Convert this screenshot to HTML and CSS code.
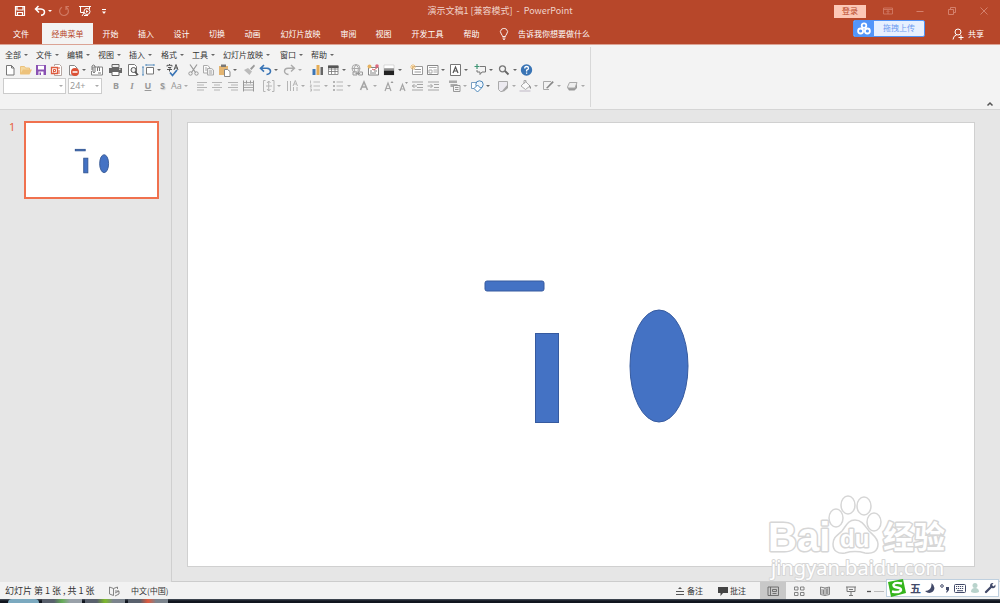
FILE: index.html
```html
<!DOCTYPE html>
<html lang="zh-CN">
<head>
<meta charset="utf-8">
<title>演示文稿1 [兼容模式] - PowerPoint</title>
<link rel="stylesheet" href="styles.css">
</head>
<body>
<header class="header">
  <div class="titlebar">
    <div class="quick">
      <button aria-label="保存"><svg width="12" height="12" viewBox="0 0 12 12"><path d="M1.5 1.5h9v9h-9zM3 1.5v3.5h6V1.500M3.500 10.500V7.500h5v3" fill="none" stroke="#fff" stroke-width="1.200"/></svg></button>
      <button class="drop" aria-label="撤消"><svg width="12" height="12" viewBox="0 0 12 12"><path d="M4.500 1 1.500 4l3.500 3.500M1.500 4H7q3.500.3 3.500 3.200Q10.300 10 7 10.300" fill="none" stroke="#fff" stroke-width="1.500"/></svg></button>
      <button aria-label="重复"><svg width="12" height="12" viewBox="0 0 12 12"><path d="M4 2.200A4.400 4.400 0 1 0 8.500 2.500M8 5V1.500h3" fill="none" stroke="#d07a64" stroke-width="1.200"/></svg></button>
      <button aria-label="从头开始"><svg width="12" height="12" viewBox="0 0 12 12"><path d="M0 1.500h12M1.500 2v5.500H5M10.500 2v2M3 11l2-3" fill="none" stroke="#fff"/><circle cx="8" cy="6.500" r="3" fill="none" stroke="#fff"/><path d="m7 5 2.500 1.500L7 8z" fill="#fff"/><path d="M5 10.500h4" stroke="#fff"/></svg></button>
      <button aria-label="自定义快速访问工具栏"><svg width="12" height="12" viewBox="0 0 12 12"><path d="M4 4.500h4" stroke="#fff"/><path d="M4 6.500h4L6 9z" fill="#fff"/></svg></button>
    </div>
    <h1 class="title">演示文稿1 [兼容模式] &nbsp;-&nbsp; PowerPoint</h1>
    <div class="window">
      <button class="login">登录</button>
      <button aria-label="功能区显示选项"><svg width="12" height="12" viewBox="0 0 12 12"><path d="M1.500 3h9v6h-9zM1.500 4.500h9M6 9V5.500M4.500 7 6 5.500 7.500 7" fill="none" stroke="#d4806c" stroke-width=".8"/></svg></button>
      <button aria-label="最小化"><svg width="12" height="12" viewBox="0 0 12 12"><path d="M2.500 6.500h7" stroke="#d4806c"/></svg></button>
      <button aria-label="还原"><svg width="12" height="12" viewBox="0 0 12 12"><path d="M2.500 4.500h5v5h-5zM4.500 4V2.500h5v5H8" fill="none" stroke="#d4806c"/></svg></button>
      <button aria-label="关闭"><svg width="12" height="12" viewBox="0 0 12 12"><path d="m2.500 2.500 7 7m0-7-7 7" stroke="#d4806c"/></svg></button>
    </div>
  </div>
  <div class="tabrow">
    <nav class="tabs">
      <button>文件</button><button class="active">经典菜单</button><button>开始</button><button>插入</button><button>设计</button><button>切换</button><button>动画</button><button>幻灯片放映</button><button>审阅</button><button>视图</button><button>开发工具</button><button>帮助</button>
    </nav>
    <button class="tell"><svg width="10" height="12" viewBox="0 0 10 12"><path d="M3.500 8.500Q3.500 7.500 2.300 6A3.500 3.500 0 1 1 7.700 6Q6.500 7.500 6.500 8.500zM3.500 10h3M4 11.300h2" fill="none" stroke="#fff" stroke-width=".9"/></svg>告诉我你想要做什么</button>
    <button class="share"><svg width="12" height="12" viewBox="0 0 12 12"><circle cx="6" cy="4" r="3" fill="none" stroke="#fff"/><path d="M1 11.500Q1.500 7.500 4.500 7M9 7v5M6.500 9.500h5" fill="none" stroke="#fff"/></svg>共享</button>
  </div>
  <button class="upload"><span class="upload-logo"><svg width="14" height="13" viewBox="0 0 14 13"><g fill="none" stroke="#fff" stroke-width="1.800"><circle cx="7" cy="3.600" r="2.300"/><circle cx="3.600" cy="9" r="2.500"/><circle cx="10.400" cy="9" r="2.500"/></g></svg></span><span class="upload-text">拖拽上传</span></button>
</header>

<section class="ribbon">
  <div class="group">
    <div class="menus">
      <button class="drop">全部</button><button class="drop">文件</button><button class="drop">编辑</button><button class="drop">视图</button><button class="drop">插入</button><button class="drop">格式</button><button class="drop">工具</button><button class="drop">幻灯片放映</button><button class="drop">窗口</button><button class="drop">帮助</button>
    </div>
    <div class="tools standard">
      <button aria-label="新建"><svg viewBox="0 0 14 14"><path d="M3.500 2.500h5l2.500 2.500v7h-7.500zM8.500 2.500V5H11" fill="#fff" stroke="#777"/></svg></button>
      <button aria-label="打开"><svg viewBox="0 0 14 14"><path d="M2.500 11V3.500h4l1 1.500h4v2" fill="#f5d9a0" stroke="#ecc27c"/><path d="M2 11.500 5 6.500h9l-2.500 5z" fill="#edc27b"/></svg></button>
      <button aria-label="保存"><svg viewBox="0 0 14 14"><path d="M2 2h10v10H2z" fill="#8a52b3"/><path d="M4 2.800h6V6.500H4zM4.500 8.500h5V12h-5z" fill="#fff"/><path d="M5.500 9.500h1.500V12H5.500z" fill="#8a52b3"/></svg></button>
      <button aria-label="演示文稿"><svg viewBox="0 0 14 14"><path d="M5.500 3V1.500h5l2 2v9H5.500V11" fill="#fff" stroke="#b5a6a1"/><path d="M2.500 4.500h6v6h-6z" fill="#fff" stroke="#dd5b3e" stroke-width="1.300"/><path d="M4.500 9.500V6.500h2v2h-2M9 5h2M9 8h2M9 10h2" fill="none" stroke="#dd5b3e"/></svg></button>
      <button class="drop" aria-label="关闭"><svg viewBox="0 0 14 14"><path d="M3.500 2.500h5L11 5v7H3.500z" fill="#fff" stroke="#888"/><circle cx="9" cy="9" r="4" fill="#dc5035"/><path d="M6.500 9h5" stroke="#fff" stroke-width="1.500"/></svg></button>
      <button aria-label="附件"><svg viewBox="0 0 14 14"><path d="M4.500 4h9v8H2.500V8" fill="#fff" stroke="#888"/><path d="M3 7V3q1.500-2 3 0v6q-1 1.500-2 0V4M8.500 8V4.500q1-1 2 0V8M9 10h3" fill="none" stroke="#777"/></svg></button>
      <button aria-label="打印"><svg viewBox="0 0 14 14"><path d="M4 1.500h7v3H4z" fill="#eee" stroke="#666"/><path d="M1 5h13v5H1z" fill="#666"/><path d="M4 8.500h7v4H4z" fill="#fff" stroke="#666"/><path d="M11 6.200h1.500" stroke="#fff"/></svg></button>
      <button aria-label="打印预览"><svg viewBox="0 0 14 14"><path d="M2.500 1.500h6l2 2v9h-8z" fill="#fff" stroke="#777"/><circle cx="7.500" cy="7" r="2.500" fill="#eee" stroke="#555"/><path d="m9 9 3 3" stroke="#555" stroke-width="1.700"/></svg></button>
      <button class="drop" aria-label="幻灯片大小"><svg viewBox="0 0 14 14"><path d="M5.500 4.500h7v6.500h-7z" fill="#fff" stroke="#777"/><path d="M5 2h8M2 4v8M1 4h2M1 12h2M5 1v2M13 1v2" stroke="#4c87ba" stroke-width=".9"/></svg></button>
      <button aria-label="拼写检查"><svg viewBox="0 0 14 14"><path d="M2 3.500V2.300h5v1.200M4.500 1v1M3 4.500h3L4.500 6v2.500M2 6.500h5M9 7l2-5.500L13 7M10 5h2.500" fill="none" stroke="#444" stroke-width=".9"/><path d="m5 9.500 2.500 3L12 7" fill="none" stroke="#3974b5" stroke-width="1.700"/></svg></button>
      <button aria-label="剪切"><svg viewBox="0 0 14 14"><path d="m4 1.500 5.500 8M11 1.500l-5.500 8" stroke="#999" stroke-width="1.200"/><g fill="none" stroke="#999"><circle cx="4.500" cy="10.500" r="1.700"/><circle cx="10.500" cy="10.500" r="1.700"/></g></svg></button>
      <button aria-label="复制"><svg viewBox="0 0 14 14"><path d="M2.500 2.500h4L8.500 4v6h-6z" fill="#fafafa" stroke="#aaa"/><path d="M6.500 5.500h4l2 1.500v5h-6zM8 8h3M8 10h3M4 5h2M4 7h2" fill="#eee" stroke="#aaa"/></svg></button>
      <button class="drop" aria-label="粘贴"><svg viewBox="0 0 14 14"><path d="M2 3h9v9H2z" fill="#e4b571"/><path d="M4 1.500h5V4H4z" fill="#777"/><path d="M7.500 6.500h3L13 8.500v5H7.500z" fill="#fff" stroke="#888"/></svg></button>
      <button aria-label="格式刷"><svg viewBox="0 0 14 14"><path d="m2 7 4-2 4 3.500L7.500 12z" fill="#bbb"/><path d="m8 5.500 4-4L13 3 9.500 7z" fill="#999"/></svg></button>
      <button class="drop" aria-label="撤消"><svg viewBox="0 0 14 14"><path d="M6 2 2.500 5.300 6 8.600M3 5.300h6q3.500.3 3.500 3Q12.300 11 8.500 11.500" fill="none" stroke="#3974b5" stroke-width="1.600"/></svg></button>
      <button class="drop dim" aria-label="恢复"><svg viewBox="0 0 14 14"><path d="m9 2 3.500 3.300L9 8.600M12 5.300H6q-3.500.3-3.500 3Q2.700 11 6.500 11.500" fill="none" stroke="#aaa" stroke-width="1.400"/></svg></button>
      <button aria-label="图表"><svg viewBox="0 0 14 14"><path d="M2.500 6h3v6h-3z" fill="#3c75b5"/><path d="M6.500 2h3v10h-3z" fill="#e5ac55"/><path d="M10.500 4h2.500v8h-2.500z" fill="#666"/></svg></button>
      <button class="drop" aria-label="表格"><svg viewBox="0 0 14 14"><path d="M2.500 3h9.500v8.500H2.500zM2.500 6h9.500M2.500 8.500h9.500M5.500 5v6M9 5v6" fill="#fff" stroke="#777" stroke-width=".8"/><path d="M2 2.500h10.500V5H2z" fill="#555"/></svg></button>
      <button aria-label="超链接"><svg viewBox="0 0 14 14"><g fill="none" stroke="#aaa"><circle cx="7" cy="5.500" r="4"/><path d="M3 5.500h8M7 1.500Q3.500 5 6 9M7 1.500Q11 5 9 8"/></g><path d="M4 9h4v3H4zM9.500 9h4v3h-4zM6.500 10.500H11" fill="#eee" stroke="#999"/></svg></button>
      <button aria-label="对象"><svg viewBox="0 0 14 14"><path d="M2.500 4.500h10v7.500h-10zM4 8h2M8 8h3M4 10h6" fill="#fff" stroke="#777" stroke-width=".9"/><circle cx="3.500" cy="3.500" r="2" fill="#e6b15f"/><circle cx="11" cy="3" r="1.800" fill="#dd6880"/><path d="m6 6 2 1 4-3" fill="none" stroke="#d5666b"/></svg></button>
      <button class="drop" aria-label="灰度"><svg viewBox="0 0 14 14"><path d="M2 2h10v10H2z" fill="#fff" stroke="#aaa" stroke-width=".4"/><path d="M2 8h10v4H2z" fill="#222"/><path d="M2 5h10v3H2z" fill="#aaa"/><path d="M2 6.500h10V8H2z" fill="#777"/></svg></button>
      <button aria-label="新建幻灯片"><svg viewBox="0 0 14 14"><path d="M3.500 3.500h10v8h-10zM5.500 6.500H12M5.500 9H12" fill="#fff" stroke="#999"/><path d="M4 1v6M1 4h6M2 2l4 4M6 2 2 6" stroke="#edbd75" stroke-width=".9"/></svg></button>
      <button class="drop" aria-label="版式"><svg viewBox="0 0 14 14"><path d="M2.500 2.500h10.500v9H2.500z" fill="#fff" stroke="#888"/><path d="M4 4.500h7.500M4 7h3v3H4zM8.500 7H12M8.500 9H12" fill="none" stroke="#aaa"/></svg></button>
      <button class="drop" aria-label="文本框"><svg viewBox="0 0 14 14"><path d="M2.500 1.500h10v11h-10z" fill="#fff" stroke="#777"/><path d="M5 10 7.500 4 10 10M6 8h3" fill="none" stroke="#555" stroke-width="1.200"/></svg></button>
      <button class="drop" aria-label="批注"><svg viewBox="0 0 14 14"><path d="M7 3.500h5.500V9H9l-2 2.500V9H4V7" fill="none" stroke="#777"/><path d="M4 1v5M1.500 3.500h5" stroke="#409575" stroke-width="1.200"/></svg></button>
      <button class="drop" aria-label="查找"><svg viewBox="0 0 14 14"><circle cx="5.500" cy="5.800" r="3" fill="none" stroke="#777" stroke-width="1.300"/><path d="m8 8 3.500 3.500" stroke="#666" stroke-width="1.800"/></svg></button>
      <button aria-label="帮助"><svg viewBox="0 0 14 14"><circle cx="7.500" cy="7" r="5.700" fill="#3974b5"/><path d="M5.700 5.500q0-2 1.900-2t1.900 1.700Q9.500 6.300 7.600 7.200v1.300M7.600 9.500v1.300" fill="none" stroke="#fff" stroke-width="1.300"/></svg></button>
    </div>
    <div class="tools format">
      <label class="combo font"><select aria-label="字体"><option></option></select></label>
      <label class="combo size"><select aria-label="字号"><option>24+</option></select></label>
      <button class="letter bold">B</button>
      <button class="letter italic">I</button>
      <button class="letter under">U</button>
      <button class="letter shadow">S</button>
      <button class="letter drop dim">Aa</button>
      <button aria-label="左对齐"><svg viewBox="0 0 14 14"><path d="M2 3.500h10M2 6h7M2 8.500h10M2 11h7" stroke="#b5b5b5"/></svg></button>
      <button aria-label="居中"><svg viewBox="0 0 14 14"><path d="M2 3.500h10M4 6h6M2 8.500h10M4 11h6" stroke="#b5b5b5"/></svg></button>
      <button aria-label="右对齐"><svg viewBox="0 0 14 14"><path d="M2 3.500h10M5 6h7M2 8.500h10M5 11h7" stroke="#b5b5b5"/></svg></button>
      <button aria-label="分散对齐"><svg viewBox="0 0 14 14"><path d="M2 3.500h11M2 6h11M2 8.500h11M2 11h11" stroke="#aaa"/><path d="M2.500 1.500v11M12.500 1.500v11M5.500 1.500v3M9.500 1.500v3" stroke="#999"/></svg></button>
      <button class="drop dim" aria-label="行距"><svg viewBox="0 0 14 14"><path d="M4.500 1.500h-2v11h2M11 1.500h2v11h-2M7.700 2v10M6 4l1.700-2 1.800 2M6 10l1.700 2 1.800-2M5 7h6" fill="none" stroke="#b5b5b5"/></svg></button>
      <button class="drop dim" aria-label="文字方向"><svg viewBox="0 0 14 14"><path d="M2.500 2v10M5.500 2v10M8.500 8v4M12 8v4M8 7l2.300-5.500L12.500 7M9 5h3" fill="none" stroke="#b5b5b5"/></svg></button>
      <button class="drop dim" aria-label="编号"><svg viewBox="0 0 14 14"><path d="M5.500 3H12M5.500 7H12M5.500 11H12M2.500 1.500v3M2 6h1.500L2 8h2M2 10h1.500v2H2" fill="none" stroke="#b5b5b5" stroke-width=".9"/></svg></button>
      <button class="drop dim" aria-label="项目符号"><svg viewBox="0 0 14 14"><path d="M5.500 3H12M5.500 7H12M5.500 11H12" stroke="#b5b5b5"/><path d="M2 2h2v2H2zM2 6h2v2H2zM2 10h2v2H2z" fill="#b5b5b5"/></svg></button>
      <button class="drop dim" aria-label="字体颜色"><svg viewBox="0 0 14 14"><path d="M3.500 11 7 3l3.500 8M5 8h4" fill="none" stroke="#a5a5a5" stroke-width="1.600"/></svg></button>
      <button aria-label="增大字号"><svg viewBox="0 0 14 14"><path d="m3 12 3-8 3 8M4 9.500h4" fill="none" stroke="#a5a5a5" stroke-width="1.200"/><path d="m8.500 4 1.500-2 1.500 2z" fill="#999"/></svg></button>
      <button aria-label="减小字号"><svg viewBox="0 0 14 14"><path d="m2 12 2.500-6.500L7 12M3 10h3" fill="none" stroke="#a5a5a5" stroke-width="1.200"/><path d="M7 3h3L8.500 5z" fill="#999"/></svg></button>
      <button aria-label="减少缩进"><svg viewBox="0 0 14 14"><path d="M2 3h11M7 5.500h6M7 8.500h6M2 11h11M2 7h5M4.500 5 2.500 7l2 2" fill="none" stroke="#a5a5a5"/></svg></button>
      <button aria-label="增加缩进"><svg viewBox="0 0 14 14"><path d="M2 3h11M8 5.500h5M8 8.500h5M2 11h11M1.500 7h5M4.500 5l2 2-2 2" fill="none" stroke="#a5a5a5"/></svg></button>
      <button class="drop dim" aria-label="排列"><svg viewBox="0 0 14 14"><path d="M2 1.500h8V4H2zM3.500 5h7v3h-7z" fill="#aaa"/><path d="M6.500 6.500H13v6H6.500zM8 8.500h3.500M8 10.500h3.500" fill="#f3f3f3" stroke="#999"/></svg></button>
      <button class="drop" aria-label="形状"><svg viewBox="0 0 14 14"><path d="M1.500 3.500h6v6h-6z" fill="#fff" stroke="#7b9fc2"/><circle cx="9.500" cy="5.500" r="3.700" fill="#eef5fc" stroke="#4c87ba"/><path d="m7.500 6 3.500 3.500L7.500 13 4 9.500z" fill="#fff" stroke="#4c87ba"/></svg></button>
      <button class="drop dim" aria-label="快速样式"><svg viewBox="0 0 14 14"><path d="M2.500 2.500h9V8l-5 4.500h-2l-2-2z" fill="#eceaf0" stroke="#aaa"/><path d="m6 12 6-7v4L8 12.500z" fill="#a5a5a5"/></svg></button>
      <button class="drop dim" aria-label="形状填充"><svg viewBox="0 0 14 14"><path d="m3 7 4.500-4.500L12 7l-4.500 3.500zM6 5V1.500h2V4" fill="#fafafa" stroke="#aaa"/><path d="M11 6q3 2 1.500 4-1-1-1.500-4" fill="#888"/><path d="M1.500 11h11v2h-11z" fill="#d9d5dc"/></svg></button>
      <button class="drop dim" aria-label="形状轮廓"><svg viewBox="0 0 14 14"><path d="M10 2.500H2.500v8H8" fill="none" stroke="#aaa"/><path d="m5 9 6.500-7 1.300 1.300L6.500 9.500z" fill="#888"/></svg></button>
      <button class="drop dim" aria-label="形状效果"><svg viewBox="0 0 14 14"><path d="M2 8.500 4 11.500h5.500L12 9V4z" fill="#999"/><path d="m2.500 8 2-4.500h7.500L10 9H3z" fill="#eee" stroke="#aaa"/></svg></button>
    </div>
  </div>
  <button class="collapse" aria-label="折叠功能区"><svg width="8" height="6" viewBox="0 0 8 6"><path d="m1.500 4.500 2.500-2.500 2.500 2.500" fill="none" stroke="#555" stroke-width="1.500"/></svg></button>
</section>

<main class="workspace">
  <aside class="pane">
    <span class="num">1</span>
    <button class="thumb" aria-label="幻灯片 1"><svg viewBox="0 0 788 444" preserveAspectRatio="none"><g fill="#4472c4" stroke="#2f528f" stroke-width="5"><rect x="297" y="158" width="60" height="9"/><rect x="348" y="211" width="25" height="88"/><ellipse cx="471" cy="244" rx="27" ry="54"/></g></svg></button>
  </aside>
  <section class="stage">
    <div class="slide"><svg viewBox="0 0 786 443" preserveAspectRatio="none"><g fill="#4472c4" stroke="#365a9f"><rect x="297" y="158" width="59" height="10" rx="2"/><rect x="347.500" y="210.500" width="23" height="89"/><ellipse cx="471" cy="243" rx="29" ry="56"/></g></svg></div>
    <div class="watermark"><svg width="182" height="90" viewBox="0 0 182 90"><g fill="#fff" stroke="#d6d6d6" stroke-width="1.500"><ellipse cx="69" cy="27" rx="7" ry="9"/><ellipse cx="81" cy="14" rx="7" ry="9"/><ellipse cx="97" cy="15" rx="7" ry="9"/><ellipse cx="107" cy="31" rx="7" ry="9"/><path d="M88 29c7 0 10 6 14 11 4 4 9 7 9 13 0 8-6 10-13 9-7-2-13-2-20 0-7 1-12-2-12-9 0-7 5-9 9-13 4-5 6-11 13-11z"/></g><g class="mark" paint-order="stroke"><text x="1" y="60" font-size="40" font-weight="700">Bai</text><text x="73" y="56" font-size="24" font-weight="700">du</text><text class="cjk" x="116" y="57" font-size="31" font-weight="700">经验</text><text class="url" x="4" y="84" font-size="20">jingyan.baidu.com</text></g></svg></div>
  </section>
</main>

<footer class="status">
  <span class="count">幻灯片 第 1 张 , 共 1 张</span>
  <button class="proof" aria-label="拼写检查"><svg width="12" height="12" viewBox="0 0 12 12"><path d="M5.500 10.500 1.500 9V2l4 1.500v7M5.500 3.500 9.500 2v2M7 6h4M7 8l4-2v3L7 11" fill="none" stroke="#777" stroke-width=".9"/></svg></button>
  <button>中文(中国)</button>
  <div class="views">
    <button class="note"><svg width="12" height="12" viewBox="0 0 12 12"><path d="m4 4 2-2 2 2z" fill="#555"/><path d="M2 6.500h8M2 9.500h8" stroke="#555"/></svg>备注</button>
    <button class="note"><svg width="12" height="12" viewBox="0 0 12 12"><path d="M1 2h10v6H6l-2.500 3V8H1z" fill="#444"/></svg>批注</button>
    <button class="view on" aria-label="普通视图"><svg width="12" height="12" viewBox="0 0 12 12"><path d="M1 2h10.500v8.500H1zM3.500 2v8.500M5.500 4.500h4v2h-4zM5.500 8.500h4" fill="none" stroke="#666" stroke-width=".9"/></svg></button>
    <button class="view" aria-label="幻灯片浏览"><svg width="12" height="12" viewBox="0 0 12 12"><path d="M1.500 2h3.500v3H1.500zM7.500 2H11v3H7.500zM1.500 7.500H5v3H1.500zM7.500 7.500H11v3H7.500z" fill="none" stroke="#777" stroke-width=".9"/></svg></button>
    <button class="view" aria-label="阅读视图"><svg width="12" height="12" viewBox="0 0 12 12"><path d="M6 3 1.500 2v7.500L6 10.500l4.500-1V2zM6 3v7.500M3 4v5M4.500 4.500v5" fill="none" stroke="#777" stroke-width=".9"/><path d="M7 3.500 9.500 3v6L7 9.500z" fill="#999"/></svg></button>
    <button class="view" aria-label="幻灯片放映"><svg width="12" height="12" viewBox="0 0 12 12"><path d="M1 2h10M2 2v4.500h8V2M6 6.500V10M4 10.500h4M4 4.500h4" fill="none" stroke="#777"/></svg></button>
    <button class="zoomout" aria-label="缩小"><svg width="20" height="12" viewBox="0 0 20 12"><path d="M3 6.500h4" stroke="#555" stroke-width="1.300"/><path d="M10 6.500h10" stroke="#bbb"/></svg></button>
  </div>
  <div class="ime">
    <svg class="sogou" width="20" height="20" viewBox="0 0 20 20"><path d="m1 4 15-3 3 14-15 4z" fill="#35b51d"/><path d="M15 5.500Q8 4 6.500 6.500 6 9 10 9.500t4 2.500q-1 3-9 1.500" fill="none" stroke="#fff" stroke-width="2.400"/></svg>
    <span>五</span>
    <svg width="12" height="12" viewBox="0 0 12 12"><path d="M7.500 1q5 4 1.500 8.500-4 3-8-.5Q8 9 7.500 1" fill="#424a69"/></svg>
    <svg width="12" height="12" viewBox="0 0 12 12"><circle cx="3" cy="4" r="1.300" fill="none" stroke="#424a69"/><path d="M7 5h3v3L8 10.500H7L8 8H7z" fill="#424a69"/></svg>
    <svg width="12" height="12" viewBox="0 0 12 12"><rect x=".5" y="2.500" width="11" height="8" rx="1" fill="#fff" stroke="#424a69"/><path d="M2 4.500h8M2 6.500h8" stroke="#424a69" stroke-dasharray="1.200 .8"/><path d="M3 8.700h6" stroke="#424a69"/></svg>
    <svg width="12" height="12" viewBox="0 0 12 12"><circle cx="6" cy="3.500" r="2.500" fill="#b9d3cc"/><path d="M2 10q0-4 4-4t4 4q-4 2-8 0" fill="#b9d3cc"/></svg>
    <svg width="12" height="12" viewBox="0 0 12 12"><path d="m2 10 5-5" stroke="#424a69" stroke-width="2.300" stroke-linecap="round"/><path d="M9.500 1Q6 .5 6 4q1 3 4 2 2-1 1.500-3.500L9.500 4.500 8 3z" fill="#424a69"/></svg>
  </div>
</footer>
<div class="taskbar"><i class="orb"></i><i class="task green"></i><i class="task lime"></i><i class="task red"></i></div>
</body>
</html>
```
FILE: styles.css
```css
* { box-sizing: border-box; }
body {
  margin: 0;
  height: 100vh;
  display: flex;
  flex-direction: column;
  overflow: hidden;
  font: 8px/12px "Noto Sans CJK SC", "Noto Sans", sans-serif;
  color: #333;
  background: #e6e6e6;
}
button {
  font: inherit;
  color: inherit;
  background: none;
  border: 0;
  padding: 0;
  display: flex;
  align-items: center;
  white-space: nowrap;
}
svg { display: block; flex: none; }
.drop::after {
  content: "";
  border: 2px solid transparent;
  border-top-color: #666;
  border-bottom: 0;
  margin-left: 3px;
}
.dim::after { border-top-color: #aaa; }

/* header */
.header { position: relative; background: #b7472a; color: #fff; border-bottom: 1px solid #dba394; }
.titlebar { display: grid; grid-template-columns: 1fr auto 1fr; align-items: center; height: 23px; padding-bottom: 1px; }
.quick { display: grid; grid-template-columns: 20px 24px 21px 19px 12px; padding-left: 14px; }
.quick .drop::after { border-top-color: #fff; margin-left: 2px; }
.title { margin: 0; font: inherit; font-size: 9px; color: #f0d3cb; }
.window { display: flex; justify-content: flex-end; align-items: center; gap: 20px; padding-right: 10px; }
.login { background: #fcc8b6; color: #b7472a; height: 13px; padding: 0 8px; margin-right: -4px; }
.tabrow { display: flex; height: 21px; }
.tabs { display: grid; grid-template-columns: 42px 51px 35px 36px 35px 36px 35px 61px 35px 35px 53px 35px; margin-right: 10px; }
.tabs button { justify-content: center; }
.tabs .active { background: #f3f3f3; color: #b7472a; }
.tell { gap: 9px; }
.share { margin-left: auto; padding-right: 16px; gap: 4px; }
.upload {
  position: absolute;
  top: 20px;
  right: 75px;
  height: 17px;
  border: 1px solid #5193f5;
  border-radius: 2px;
  background: #e7f0ff;
  color: #6d9cf0;
  align-items: stretch;
  overflow: hidden;
}
.upload-logo { background: #5396fa; padding: 1px 3px; }
.upload-text { padding: 1px 9px; }

/* ribbon */
.ribbon { display: flex; justify-content: space-between; height: 65px; padding: 2px 6px 2px 0; background: #f3f3f3; border-bottom: 1px solid #d5d5d5; }
.group { width: 591px; border-right: 1px solid #d8d8d8; padding-left: 3px; }
.menus { display: grid; grid-template-columns: 31px 31px 31px 31px 32px 31px 31px 57px 31px 31px; padding-left: 2px; height: 15px; }
.tools { display: grid; align-items: center; height: 16px; }
.tools svg { width: 14px; height: 14px; }
.tools .drop::after { margin-left: 2px; }
.standard { grid-template-columns: 15px 16px 15px 17px 23px 19px 18px 15px 24px 21px 15px 16px 25px 16px 24px 28px 16px 23px 17px 16px 27px 16px 23px 25px 24px 22px 15px; }
.format { grid-template-columns: 66px 39px 16px 16px 16px 13px 26px 15px 16px 15px 20px 24px 23px 23px 26px 25px 16px 12px 16px 21px 23px 26px 22px 23px 24px 23px; }
.combo { position: relative; height: 16px; }
.combo::after {
  content: "";
  position: absolute;
  right: 3px;
  top: 7px;
  border: 2px solid transparent;
  border-top-color: #aaa;
  border-bottom: 0;
}
.combo select { width: 100%; height: 16px; border: 1px solid #ccc; background: #fff; appearance: none; font: 9px/12px "Noto Sans", sans-serif; color: #999; padding: 0 1px; }
.font { width: 63px; }
.size { width: 34px; margin-left: -1px; }
.letter { justify-content: center; color: #999; font-family: "Noto Sans", sans-serif; font-size: 9px; }
.letter.drop { justify-content: flex-start; padding-left: 2px; }
.bold, .under, .shadow { font-weight: 700; }
.italic { font-family: "Liberation Serif", serif; font-style: italic; font-weight: 700; }
.under { text-decoration: underline; }
.shadow { text-shadow: 1px 1px 1px #ccc; }
.collapse { align-self: flex-end; }

/* slides */
.workspace { flex: 1; min-height: 0; display: flex; }
.pane { width: 172px; display: flex; align-items: flex-start; gap: 9px; padding: 11px 12px 0 9px; border-right: 1px solid #cfcfcf; }
.num { color: #e8623c; font: 11px/12px "Noto Sans", sans-serif; }
.thumb { flex: 1; border: 2px solid #f0714e; background: #fff; }
.thumb svg { width: 100%; height: 74px; }
.stage { position: relative; flex: 1; display: flex; padding: 12px 25px 14px 15px; border-bottom: 1px solid #ccc; }
.slide { flex: 1; background: #fff; border: 1px solid #d0d0d0; }
.slide svg { width: 100%; height: 100%; }
.watermark { position: absolute; right: 51px; bottom: 0; }
.mark { fill: #fff; stroke: #d6d6d6; stroke-width: 3px; stroke-linejoin: round; font-family: "Liberation Sans", sans-serif; }
.cjk { font-family: "Noto Sans CJK SC", sans-serif; }
.url { font-family: "Noto Sans", sans-serif; stroke-width: 2px; }

/* status */
.status { position: relative; display: flex; align-items: stretch; height: 17px; padding-left: 5px; background: #f2f2f2; }
.status > .count { display: flex; align-items: center; width: 103px; font-size: 9px; white-space: nowrap; }
.proof { width: 23px; }
.views { margin-left: auto; display: flex; padding-right: 116px; }
.note { width: 43px; gap: 1px; }
.view { width: 26px; justify-content: center; }
.on { background: #c8c8c8; }
.ime {
  position: absolute;
  right: 1px;
  bottom: 2px;
  height: 18px;
  display: flex;
  align-items: center;
  gap: 3px;
  padding-right: 2px;
  background: #fff;
  border: 1px solid #bfd0df;
  color: #424a69;
  font-size: 11px;
  font-weight: 700;
}
.taskbar { display: flex; gap: 3px; height: 4px; padding-left: 8px; background: linear-gradient(#4b535e, #10151e 50%); }
.orb { width: 31px; border-radius: 12px 12px 0 0; background: #7ba9bf; }
.task { width: 40px; background: linear-gradient(90deg, #59616d, #99a1a9); }
.green { background: linear-gradient(90deg, #59616d 30%, #64ad55 50%, #99a1a9 70%); }
.lime { background: linear-gradient(90deg, #59616d 30%, #7dbb29 50%, #7c848d 70%); }
.red { background: linear-gradient(90deg, #59616d 30%, #e05a3e 50%, #7c848d 70%); }
```
